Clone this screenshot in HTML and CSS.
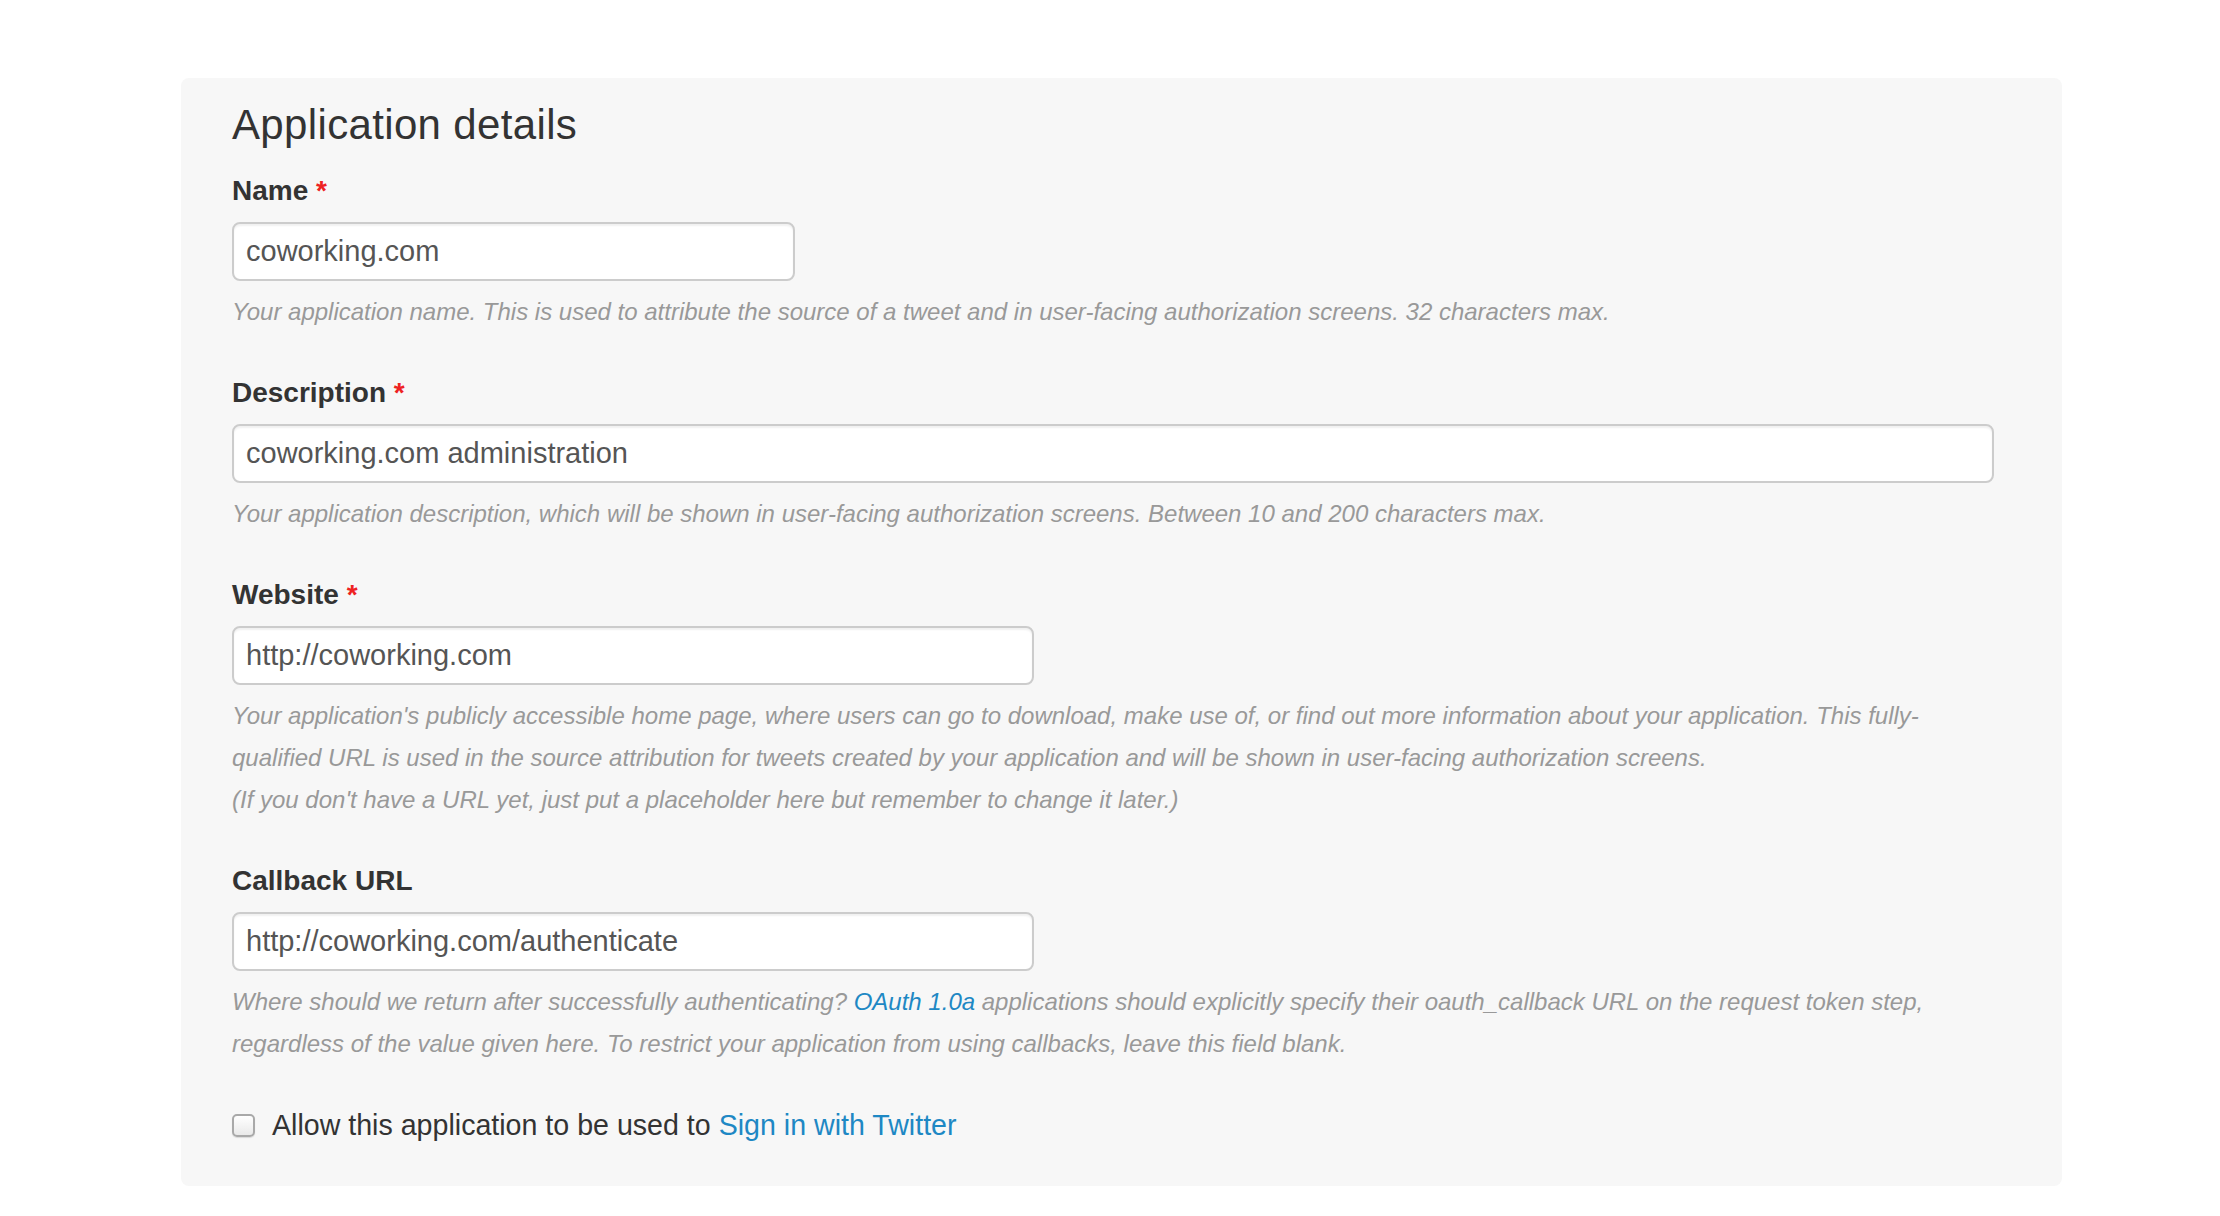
FILE: index.html
```html
<!DOCTYPE html>
<html lang="en">
<head>
<meta charset="utf-8">
<title>Application details</title>
<link rel="stylesheet" href="styles.css">
</head>
<body>
<div class="panel">
  <h3 class="title">Application details</h3>
  <form class="form">
    <div class="field">
      <label class="label">Name <span class="req">*</span></label>
      <input class="input input-name" type="text" value="coworking.com">
      <p class="help">Your application name. This is used to attribute the source of a tweet and in user-facing authorization screens. 32 characters max.</p>
    </div>
    <div class="field">
      <label class="label">Description <span class="req">*</span></label>
      <input class="input input-desc" type="text" value="coworking.com administration">
      <p class="help">Your application description, which will be shown in user-facing authorization screens. Between 10 and 200 characters max.</p>
    </div>
    <div class="field">
      <label class="label">Website <span class="req">*</span></label>
      <input class="input input-url" type="text" value="http://coworking.com">
      <p class="help">Your application's publicly accessible home page, where users can go to download, make use of, or find out more information about your application. This fully-<br>qualified URL is used in the source attribution for tweets created by your application and will be shown in user-facing authorization screens.<br>(If you don't have a URL yet, just put a placeholder here but remember to change it later.)</p>
    </div>
    <div class="field">
      <label class="label">Callback URL</label>
      <input class="input input-url" type="text" value="http://coworking.com/authenticate">
      <p class="help">Where should we return after successfully authenticating? <a class="link" href="#">OAuth 1.0a</a> applications should explicitly specify their oauth_callback URL on the request token step,<br>regardless of the value given here. To restrict your application from using callbacks, leave this field blank.</p>
    </div>
    <label class="check-row">
      <input class="check" type="checkbox">
      <span>Allow this application to be used to <a class="link" href="#">Sign in with Twitter</a></span>
    </label>
  </form>
</div>
</body>
</html>
```

FILE: styles.css
```css
html, body {
  margin: 0;
  padding: 0;
  background: #ffffff;
}

body {
  font-family: "Liberation Sans", Arial, sans-serif;
  color: #333333;
}

.panel {
  box-sizing: border-box;
  width: 1881px;
  margin: 78px 0 0 181px;
  padding: 23px 52px 43px 51px;
  background: #f7f7f7;
  border-radius: 8px;
}

.title {
  margin: 0 0 24px 0;
  font-size: 42px;
  line-height: 48px;
  font-weight: 400;
  letter-spacing: 0.35px;
  color: #333333;
}

.form {
  display: flex;
  flex-direction: column;
  gap: 42px;
  margin: 0;
}

.field {
  display: flex;
  flex-direction: column;
  align-items: flex-start;
}

.label {
  display: block;
  margin: 0 0 13px 0;
  font-size: 28px;
  line-height: 36px;
  font-weight: 700;
  color: #333333;
}

.req {
  color: #ee2222;
}

.input {
  box-sizing: border-box;
  height: 59px;
  margin: 0;
  padding: 0 12px;
  border: 2px solid #cccccc;
  border-radius: 8px;
  background: #ffffff;
  box-shadow: inset 0 2px 2px rgba(0, 0, 0, 0.06);
  font-family: "Liberation Sans", Arial, sans-serif;
  font-size: 29px;
  color: #555555;
  outline: none;
}

.input-name {
  width: 563px;
}

.input-desc {
  width: 1762px;
}

.input-url {
  width: 802px;
}

.help {
  margin: 10px 0 0 0;
  font-size: 24px;
  line-height: 42px;
  font-style: italic;
  color: #999999;
  white-space: nowrap;
}

.link {
  color: #1e88c4;
  text-decoration: none;
}

.check-row {
  display: flex;
  align-items: center;
  gap: 17px;
  height: 36px;
  font-size: 28.6px;
  line-height: 36px;
  color: #333333;
}

.check {
  -webkit-appearance: none;
  appearance: none;
  box-sizing: border-box;
  width: 23px;
  height: 23px;
  margin: 0;
  border: 2px solid #a9a9a9;
  border-radius: 5px;
  background: linear-gradient(#ffffff, #e9e9e9);
  box-shadow: 0 1px 1px rgba(0, 0, 0, 0.12);
  flex: none;
}
```
